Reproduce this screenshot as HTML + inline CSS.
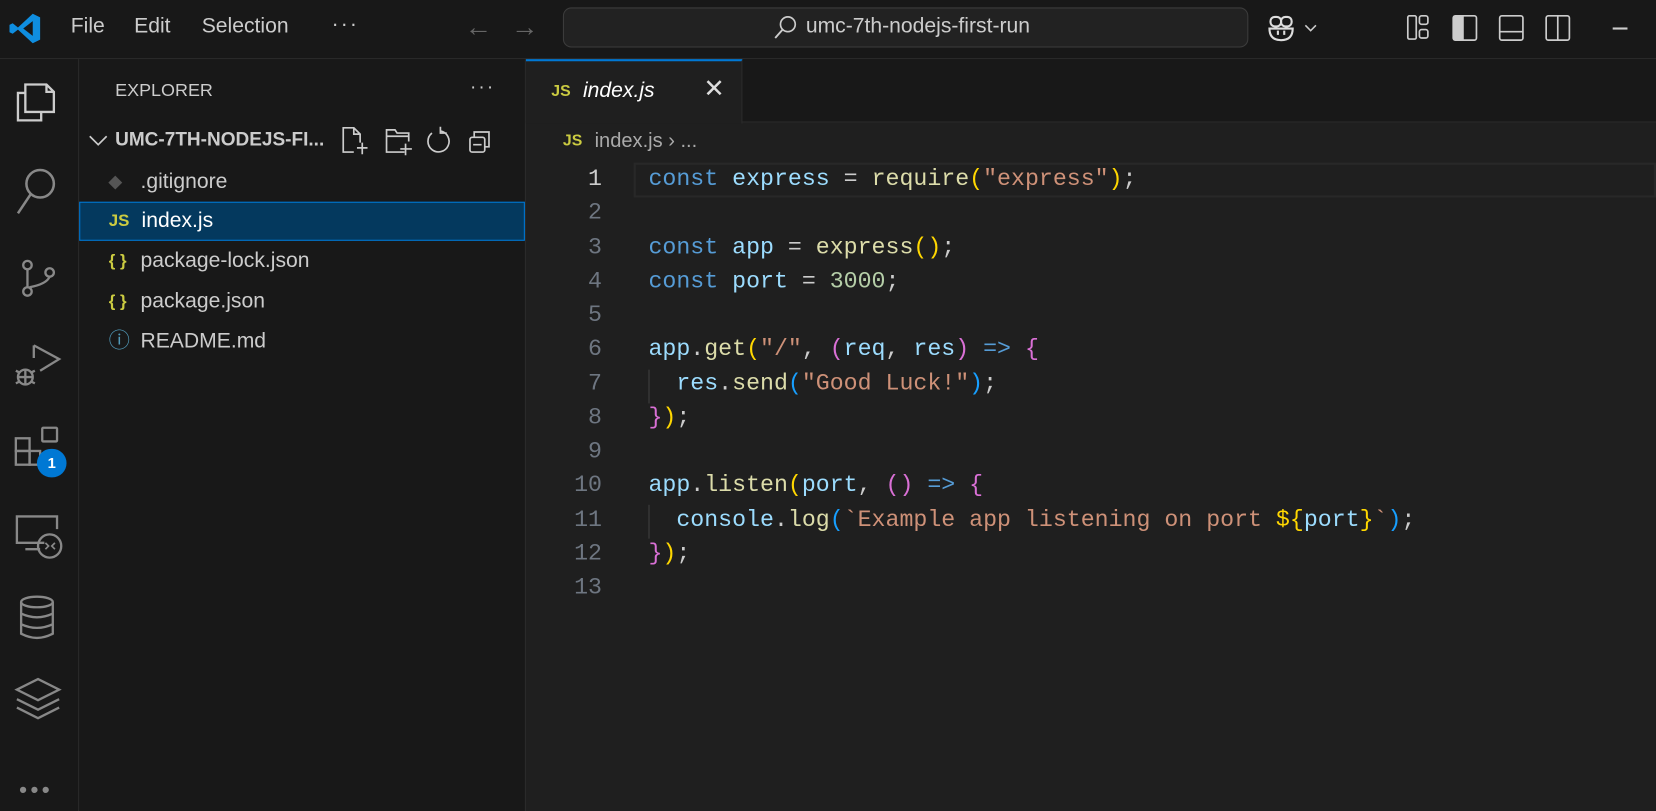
<!DOCTYPE html>
<html><head><meta charset="utf-8"><style>
*{margin:0;padding:0;box-sizing:border-box}
html,body{width:1656px;height:811px;overflow:hidden;background:#1f1f1f}
#root{width:1568px;height:768px;transform:scale(1.05612);transform-origin:0 0;background:#1f1f1f;font-family:"Liberation Sans",sans-serif;overflow:hidden;position:relative;color:#ccc}
.abs{position:absolute}
#title{left:0;top:0;width:1568px;height:56px;background:#181818;border-bottom:1px solid #2b2b2b}
.menu{top:14px;font-size:20px;color:#ccc}
#search{left:533px;top:7px;width:649px;height:38px;border:1px solid #3c3c3c;border-radius:8px;background:#222;}
#act{left:0;top:56px;width:75px;height:712px;background:#181818;border-right:1px solid #2b2b2b}
#side{left:75px;top:56px;width:423px;height:712px;background:#181818;border-right:1px solid #2b2b2b}
.file{left:0;width:422px;height:37px;font-size:20px;color:#ccc;padding-left:58px;line-height:37px}
.file .ic{position:absolute;left:28px;font-size:16px;font-weight:bold}
#tabs{left:498px;top:56px;width:1070px;height:60px;background:#181818;border-bottom:1px solid #2b2b2b}
#tab{left:498px;top:56px;width:205px;height:61px;background:#1f1f1f;border-top:2px solid #0078d4;border-right:1px solid #2b2b2b}
.code{font-family:"Liberation Mono",monospace;font-size:22px;white-space:pre;line-height:32.25px}
#nums{left:520px;top:154px;width:50px;text-align:right;color:#6e7681}
#src{left:614px;top:154px;color:#ccc}
.k{color:#569cd6}.v{color:#9cdcfe}.f{color:#dcdcaa}.s{color:#ce9178}.n{color:#b5cea8}.y{color:#ffd700}.p{color:#da70d6}.b{color:#179fff}
svg{position:absolute}
</style></head><body><div id="root">
<div id="title" class="abs"></div>
<svg style="left:8px;top:11px" width="32" height="32" viewBox="0 0 32 32"><path d="M23 2 L30 5.5 V26.5 L23 30 L9 17 L4 21 L1 19.5 V12.5 L4 11 L9 15 Z M23 9 L14 16 L23 23 Z" fill="#0f8ee0" fill-rule="evenodd"/></svg>
<div class="abs menu" style="left:67px">File</div>
<div class="abs menu" style="left:127px">Edit</div>
<div class="abs menu" style="left:191px">Selection</div>
<div class="abs menu" style="left:314px;top:12px;letter-spacing:2px">···</div>
<div class="abs" style="left:440px;top:10px;font-size:26px;color:#666">←</div>
<div class="abs" style="left:484px;top:10px;font-size:26px;color:#666">→</div>
<div id="search" class="abs"></div>
<svg style="left:732px;top:14px" width="24" height="24" viewBox="0 0 24 24"><circle cx="14" cy="9" r="7" stroke="#ccc" stroke-width="1.6" fill="none"/><path d="M9 14 L2 22" stroke="#ccc" stroke-width="1.8"/></svg>
<div class="abs" style="left:763px;top:14px;font-size:20px;color:#ccc">umc-7th-nodejs-first-run</div>
<svg style="left:1200px;top:12px" width="56" height="30" viewBox="0 0 56 30"><rect x="3" y="4" width="10" height="9" rx="4" stroke="#ddd" stroke-width="2" fill="none"/><rect x="13" y="4" width="10" height="9" rx="4" stroke="#ddd" stroke-width="2" fill="none"/><path d="M2 15 Q2 26 13 26 Q24 26 24 15 Z" stroke="#ddd" stroke-width="2" fill="none"/><path d="M10 17v4M16 17v4" stroke="#ddd" stroke-width="2"/><path d="M36 12 l5 5 l5 -5" stroke="#ccc" stroke-width="1.5" fill="none"/></svg>
<svg style="left:1330px;top:12px" width="160" height="30" viewBox="0 0 160 30"><rect x="3" y="3" width="8" height="22" rx="1.5" stroke="#ccc" stroke-width="1.6" fill="none"/><rect x="14" y="3" width="8" height="8" rx="2" stroke="#ccc" stroke-width="1.6" fill="none"/><rect x="14" y="16" width="8" height="8" rx="2" stroke="#ccc" stroke-width="1.6" fill="none"/>
<rect x="46" y="3" width="22" height="23" rx="2" stroke="#ccc" stroke-width="1.6" fill="none"/><rect x="46" y="3" width="10" height="23" fill="#ccc"/>
<rect x="90" y="3" width="22" height="23" rx="2" stroke="#ccc" stroke-width="1.6" fill="none"/><path d="M90 18H112" stroke="#ccc" stroke-width="1.6"/>
<rect x="134" y="3" width="22" height="23" rx="2" stroke="#ccc" stroke-width="1.6" fill="none"/><path d="M145 3V26" stroke="#ccc" stroke-width="1.6"/></svg>
<div class="abs" style="left:1527px;top:26px;width:14px;height:1.5px;background:#ccc"></div>

<div id="act" class="abs"></div>
<svg style="left:14px;top:72px" width="40" height="50" viewBox="0 0 40 50" fill="none" stroke="#ccc" stroke-width="2.2">
<path d="M10 8 H30 L37 15 V34 H10 Z M30 8 V15 H37"/><path d="M10 16 H3 V42 H25 V34"/>
</svg>
<svg style="left:14px;top:158px" width="44" height="50" viewBox="0 0 44 50" fill="none" stroke="#888" stroke-width="2.4"><circle cx="24" cy="16" r="13"/><path d="M15 26 L3 44"/></svg>
<svg style="left:14px;top:245px" width="44" height="40" viewBox="0 0 44 40" fill="none" stroke="#888" stroke-width="2.2"><circle cx="12" cy="6" r="4"/><circle cx="12" cy="31" r="4"/><circle cx="33" cy="13" r="4"/><path d="M12 10V27M33 17 Q30 24 14 27"/></svg>
<svg style="left:12px;top:325px" width="48" height="44" viewBox="0 0 48 44" fill="none" stroke="#888" stroke-width="2.2"><path d="M20 2 L44 15 L26 26 M20 2 V14"/><circle cx="12" cy="32" r="7"/><path d="M3 26 L7 28 M3 38 L7 36 M21 26 L17 28 M21 38 L17 36 M12 25V39M5 32H19"/></svg>
<svg style="left:12px;top:403px" width="50" height="50" viewBox="0 0 50 50" fill="none" stroke="#888" stroke-width="2.2"><rect x="3" y="12" width="13" height="12"/><rect x="3" y="24" width="13" height="13"/><rect x="16" y="24" width="10" height="13"/><rect x="28" y="2" width="14" height="13" rx="1"/></svg>
<div class="abs" style="left:35px;top:425px;width:28px;height:27px;border-radius:14px;background:#0078d4;color:#fff;font-size:14px;font-weight:bold;text-align:center;line-height:27px">1</div>
<svg style="left:12px;top:487px" width="50" height="44" viewBox="0 0 50 44" fill="none" stroke="#888" stroke-width="2.2"><path d="M30 27 H4 V2 H42 V14"/><path d="M12 33 H26"/><circle cx="35" cy="30" r="11"/><path d="M31 27l3 3l-3 3M40 27l-3 3l3 3" stroke-width="1.6"/></svg>
<svg style="left:18px;top:562px" width="36" height="46" viewBox="0 0 36 46" fill="none" stroke="#888" stroke-width="2.2"><ellipse cx="17" cy="8" rx="15" ry="5"/><path d="M2 8V38Q17 46 32 38V8M2 19Q17 26 32 19M2 29Q17 36 32 29"/></svg>
<svg style="left:13px;top:640px" width="48" height="50" viewBox="0 0 48 50" fill="none" stroke="#888" stroke-width="2.2"><path d="M23 3 L43 13 L23 23 L3 13 Z"/><path d="M3 22 L23 32 L43 22M3 30 L23 40 L43 30"/></svg>
<div class="abs" style="left:18px;top:735px;font-size:22px;color:#888;letter-spacing:3px">•••</div>

<div id="side" class="abs">
<div class="abs" style="left:34px;top:20px;font-size:17px;color:#ccc">EXPLORER</div>
<div class="abs" style="left:370px;top:16px;font-size:18px;color:#ccc;letter-spacing:2px">···</div>
<svg style="left:8px;top:70px" width="20" height="16" viewBox="0 0 20 16"><path d="M2 3l8 8l8-8" stroke="#ccc" stroke-width="1.6" fill="none"/></svg>
<div class="abs" style="left:34px;top:66px;font-size:18px;font-weight:bold;color:#ccc">UMC-7TH-NODEJS-FI...</div>
<svg style="left:246px;top:62px" width="160" height="34" viewBox="0 0 160 34" fill="none" stroke="#ccc" stroke-width="1.6"><path d="M14 26H4V3H14L20 9V17M14 3V9H20M17 22H27M22 17V28"/><path d="M62 26H45V5H53L55 8H66V16M45 11H66M58 23H69M63 18V29"/><path d="M88 8 A10 10 0 1 0 96 6 M96 2V8H102" /><rect x="124" y="12" width="14" height="14" rx="2"/><path d="M128 12V7H142V21H138M127 19H135"/></svg>
<div class="abs file" style="top:98px"><span class="ic" style="color:#555">◆</span>.gitignore</div>
<div class="abs file" style="top:135px;background:#04395e;border:1px solid #0078d4;line-height:35px;color:#fff"><span class="ic" style="color:#cbcb41;left:27px">JS</span>index.js</div>
<div class="abs file" style="top:173px"><span class="ic" style="color:#cbcb41">{ }</span>package-lock.json</div>
<div class="abs file" style="top:211px"><span class="ic" style="color:#cbcb41">{ }</span>package.json</div>
<div class="abs file" style="top:249px"><span class="ic" style="color:#519aba;font-weight:normal;font-size:20px">ⓘ</span>README.md</div>
</div>

<div id="tabs" class="abs"></div>
<div id="tab" class="abs"><span class="abs" style="left:24px;top:20px;font-size:15px;font-weight:bold;color:#cbcb41">JS</span><span class="abs" style="left:54px;top:17px;font-size:20px;font-style:italic;color:#fff">index.js</span><span class="abs" style="left:168px;top:12px;font-size:24px;color:#ddd">✕</span></div>
<div class="abs" style="left:533px;top:125px;font-size:15px;font-weight:bold;color:#cbcb41">JS</div>
<div class="abs" style="left:563px;top:123px;font-size:19px;color:#aaa">index.js &#x203A; ...</div>
<div class="abs" style="left:600px;top:154px;width:968px;height:33px;border:2px solid #282828"></div>
<div class="abs" style="left:614px;top:350px;width:1px;height:32px;background:#404040"></div>
<div class="abs" style="left:614px;top:478px;width:1px;height:32px;background:#404040"></div>
<div id="nums" class="abs code"><span style="color:#ccc">1</span>
2
3
4
5
6
7
8
9
10
11
12
13</div>
<div id="src" class="abs code"><span class="k">const</span> <span class="v">express</span> = <span class="f">require</span><span class="y">(</span><span class="s">"express"</span><span class="y">)</span>;

<span class="k">const</span> <span class="v">app</span> = <span class="f">express</span><span class="y">()</span>;
<span class="k">const</span> <span class="v">port</span> = <span class="n">3000</span>;

<span class="v">app</span>.<span class="f">get</span><span class="y">(</span><span class="s">"/"</span>, <span class="p">(</span><span class="v">req</span>, <span class="v">res</span><span class="p">)</span> <span class="k">=&gt;</span> <span class="p">{</span>
  <span class="v">res</span>.<span class="f">send</span><span class="b">(</span><span class="s">"Good Luck!"</span><span class="b">)</span>;
<span class="p">}</span><span class="y">)</span>;

<span class="v">app</span>.<span class="f">listen</span><span class="y">(</span><span class="v">port</span>, <span class="p">()</span> <span class="k">=&gt;</span> <span class="p">{</span>
  <span class="v">console</span>.<span class="f">log</span><span class="b">(</span><span class="s">`Example app listening on port </span><span class="y">${</span><span class="v">port</span><span class="y">}</span><span class="s">`</span><span class="b">)</span>;
<span class="p">}</span><span class="y">)</span>;
</div>
</div></body></html>
